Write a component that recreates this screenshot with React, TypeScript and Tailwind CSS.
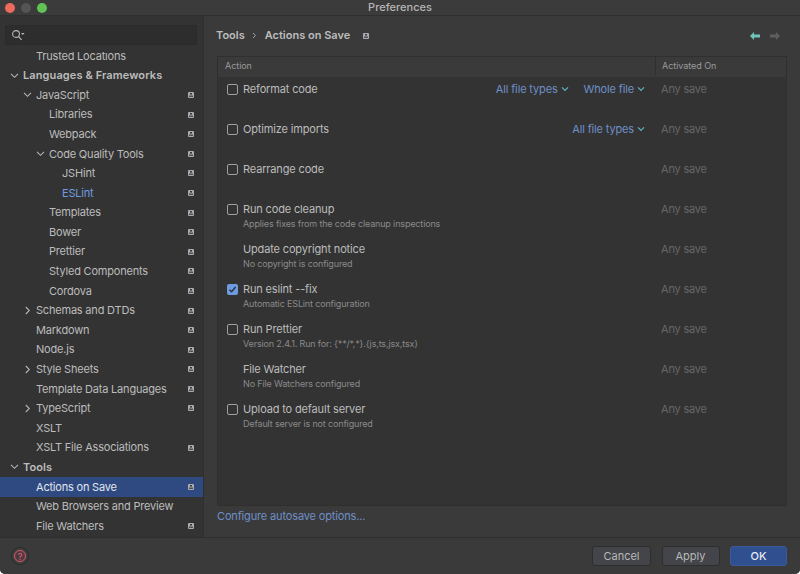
import React from "react";

const font = { fontFamily: "Inter, 'Noto Sans', sans-serif" };

function Badge({ className = "" }: { className?: string }) {
  return (
    <svg width="6" height="6" viewBox="0 0 6 6" className={className}>
      <rect width="6" height="6" rx="1" fill="#a9adb2" />
      <rect x="2" y="1" width="2" height="1.6" fill="#3a3a3a" />
      <rect x="1" y="3.6" width="4" height="1.2" fill="#3a3a3a" />
    </svg>
  );
}

function Chevron({ open, left }: { open: boolean; left: number }) {
  return (
    <svg
      width="9"
      height="9"
      viewBox="0 0 9 9"
      fill="none"
      stroke="#b4b4b4"
      strokeWidth="1.1"
      className="absolute top-[5px]"
      style={{ left }}
    >
      {open ? <path d="M1 2.8 4.5 6.3 8 2.8" /> : <path d="M2.8 1 6.3 4.5 2.8 8" />}
    </svg>
  );
}

type Item = { t: string; x: number; ch?: "o" | "c"; b?: boolean; bold?: boolean; sel?: boolean; link?: boolean };

const tree: Item[] = [
  { t: "Trusted Locations", x: 36 },
  { t: "Languages & Frameworks", x: 23, ch: "o", bold: true },
  { t: "JavaScript", x: 36, ch: "o", b: true },
  { t: "Libraries", x: 49, b: true },
  { t: "Webpack", x: 49, b: true },
  { t: "Code Quality Tools", x: 49, ch: "o", b: true },
  { t: "JSHint", x: 62, b: true },
  { t: "ESLint", x: 62, b: true, link: true },
  { t: "Templates", x: 49, b: true },
  { t: "Bower", x: 49, b: true },
  { t: "Prettier", x: 49, b: true },
  { t: "Styled Components", x: 49, b: true },
  { t: "Cordova", x: 49, b: true },
  { t: "Schemas and DTDs", x: 36, ch: "c", b: true },
  { t: "Markdown", x: 36, b: true },
  { t: "Node.js", x: 36, b: true },
  { t: "Style Sheets", x: 36, ch: "c", b: true },
  { t: "Template Data Languages", x: 36, b: true },
  { t: "TypeScript", x: 36, ch: "c", b: true },
  { t: "XSLT", x: 36 },
  { t: "XSLT File Associations", x: 36, b: true },
  { t: "Tools", x: 23, ch: "o", bold: true },
  { t: "Actions on Save", x: 36, b: true, sel: true },
  { t: "Web Browsers and Preview", x: 36 },
  { t: "File Watchers", x: 36, b: true },
];

function TreeRow({ item }: { item: Item }) {
  const color = item.sel ? "text-[#e2e6ee]" : item.link ? "text-[#6f9be0]" : "text-[#bcbcbc]";
  return (
    <div
      className={`relative flex h-[19.6px] shrink-0 items-center text-[11px] ${item.sel ? "bg-[#2f4a80]" : ""} ${color} ${item.bold ? "font-semibold tracking-[0.1px]" : "tracking-[-0.2px]"}`}
      style={{ paddingLeft: item.x }}
    >
      {item.ch && <Chevron open={item.ch === "o"} left={item.x - 13.5} />}
      <span className="flex-1 whitespace-nowrap">{item.t}</span>
      {item.b && <Badge className="mr-[9px]" />}
    </div>
  );
}

function Dropdown({ t }: { t: string }) {
  return (
    <span className="flex items-center gap-[3px] whitespace-nowrap text-[#6f8fc8]">
      {t}
      <svg width="8" height="6" viewBox="0 0 8 6" fill="none" stroke="#5fb4c4" strokeWidth="1.2">
        <path d="M1 1.3 4 4.3 7 1.3" />
      </svg>
    </span>
  );
}

function Check({ on }: { on?: boolean }) {
  return on ? (
    <span className="flex h-[11px] w-[11px] items-center justify-center rounded-[2px] bg-[#6e9ae0]">
      <svg width="9" height="9" viewBox="0 0 9 9" fill="none" stroke="#26303f" strokeWidth="1.4">
        <path d="M1.5 4.7 3.6 6.8 7.6 2" />
      </svg>
    </span>
  ) : (
    <span className="h-[11px] w-[11px] rounded-[2px] border border-[#a0a0a0]" />
  );
}

type Row = { t: string; s?: string; c?: boolean; on?: boolean; d?: string[] };
const rows: Row[] = [
  { t: "Reformat code", c: true, d: ["All file types", "Whole file"] },
  { t: "Optimize imports", c: true, d: ["All file types"] },
  { t: "Rearrange code", c: true },
  { t: "Run code cleanup", s: "Applies fixes from the code cleanup inspections", c: true },
  { t: "Update copyright notice", s: "No copyright is configured" },
  { t: "Run eslint --fix", s: "Automatic ESLint configuration", c: true, on: true },
  { t: "Run Prettier", s: "Version 2.4.1. Run for: {**/*,*}.{js,ts,jsx,tsx}", c: true },
  { t: "File Watcher", s: "No File Watchers configured" },
  { t: "Upload to default server", s: "Default server is not configured", c: true },
];

function ActionRow({ r }: { r: Row }) {
  return (
    <div className="flex h-10 shrink-0">
      <div className="flex w-[438px] shrink-0 items-start pt-[5px]">
        <div className="flex h-[14px] w-[25px] shrink-0 items-center pl-[9px]">{r.c && <Check on={r.on} />}</div>
        <div className="flex-1">
          <div className="flex h-[14px] items-center justify-between pr-[11px] text-[11px] tracking-[-0.15px] text-[#bcbcbc]">
            <span className="whitespace-nowrap">{r.t}</span>
            {r.d && (
              <span className="flex gap-[15px]">
                {r.d.map((d) => (
                  <Dropdown key={d} t={d} />
                ))}
              </span>
            )}
          </div>
          {r.s && <div className="mt-[1px] text-[9px] leading-[13px] tracking-[-0.15px] text-[#8a8a8a]">{r.s}</div>}
        </div>
      </div>
      <div className="h-[24px] pl-[5px] pt-[5px] text-[11px] leading-[14px] tracking-[-0.2px] text-[#666666]">Any save</div>
    </div>
  );
}

function Btn({ t, primary, w }: { t: string; primary?: boolean; w: string }) {
  return (
    <button
      className={`h-[20px] ${w} rounded-[3px] border text-[11px] ${primary ? "border-[#3a5a98] bg-[#2f4f8f] font-medium text-[#e4e8f0]" : "border-[#2e2e2e] bg-[#43454a] text-[#b8b8b8]"}`}
    >
      {t}
    </button>
  );
}

export default function App() {
  return (
    <div style={font} className="flex h-[574px] w-[800px] flex-col overflow-hidden rounded-b-[5px] bg-[#3a3a3a]">
      {/* Title bar */}
      <div className="relative flex h-[16px] shrink-0 items-center justify-center border-b border-[#2f2f2f] bg-[#3b3b3b] text-[11px] font-medium text-[#b5b5b5]">
        <div className="absolute left-[5px] top-[3px] flex gap-[6px]">
          <span className="h-[10px] w-[10px] rounded-full bg-[#ee6a5f]" />
          <span className="h-[10px] w-[10px] rounded-full bg-[#545454]" />
          <span className="h-[10px] w-[10px] rounded-full bg-[#5fc454]" />
        </div>
        Preferences
      </div>

      <div className="flex min-h-0 flex-1">
        {/* Sidebar */}
        <div className="flex w-[204px] shrink-0 flex-col border-r border-[#2f2f2f] bg-[#333333]">
          <div className="shrink-0 px-[5px] pt-[9px]">
            <div className="flex h-[20px] w-[192px] items-center rounded-[2px] border border-[#2b2b2b] bg-[#2d2d2d] pl-[5px]">
              <svg width="15" height="12" viewBox="0 0 15 12" fill="none" stroke="#b8b8b8" strokeWidth="1.1">
                <circle cx="5" cy="5" r="3.4" />
                <path d="M7.6 7.6 10.6 10.8" />
                <path d="M10 4h3.6l-1.8 1.9z" fill="#b8b8b8" stroke="none" />
              </svg>
            </div>
          </div>
          <div className="mt-[7px] flex min-h-0 flex-1 flex-col overflow-hidden">
            <div className="-mt-[6px] flex flex-col">
              {tree.map((it) => (
                <TreeRow key={it.t} item={it} />
              ))}
            </div>
          </div>
        </div>

        {/* Main */}
        <div className="flex min-w-0 flex-1 flex-col px-[13px]">
          <div className="flex h-[39px] shrink-0 items-center text-[11px] font-semibold text-[#bcbcbc]">
            <span className="-ml-[1px]">Tools</span>
            <svg width="5" height="7" viewBox="0 0 5 7" fill="none" stroke="#a0a0a0" className="mx-[7.5px]">
              <path d="M1 1l2.5 2.5L1 6" />
            </svg>
            <span>Actions on Save</span>
            <Badge className="ml-[13px]" />
            <svg width="10" height="8" viewBox="0 0 10 8" className="ml-auto" fill="#6fc3bb">
              <path d="M0 4 4 0v2.5h6v3H4V8z" />
            </svg>
            <svg width="10" height="8" viewBox="0 0 10 8" className="ml-[10px] mr-[7px]" fill="#5e5e5e">
              <path d="M10 4 6 0v2.5H0v3h6V8z" />
            </svg>
          </div>

          <div className="mt-[1px] flex h-[450px] shrink-0 flex-col border border-[#2f2f2f] bg-[#333333]">
            <div className="flex h-[20px] shrink-0 bg-[#3a3a3a] pb-[2px] text-[9px] tracking-[-0.05px] text-[#9a9a9a]">
              <div className="flex w-[438px] items-center border-r border-[#2f2f2f] pl-[7px]">Action</div>
              <div className="flex items-center pl-[6px]">Activated On</div>
            </div>
            {rows.map((r) => (
              <ActionRow key={r.t} r={r} />
            ))}
          </div>

          <div className="flex h-[20px] items-center text-[11px] tracking-[-0.15px] text-[#6f8fc8]">Configure autosave options...</div>
        </div>
      </div>

      {/* Footer */}
      <div className="flex h-[37px] shrink-0 items-center border-t border-[#2f2f2f] bg-[#3a3a3a] pl-[11px] pr-[13px]">
        <div className="flex h-[18px] w-[18px] items-center justify-center rounded-full border border-[#2a2a2a] bg-[#3f3f3f]">
          <span className="flex h-[12px] w-[12px] items-center justify-center rounded-full border border-[#d8566c] bg-[#4c3a40] text-[9px] font-medium leading-none text-[#e0606f]">?</span>
        </div>
        <div className="ml-auto flex gap-[10.5px]">
          <Btn t="Cancel" w="w-[59px]" />
          <Btn t="Apply" w="w-[58px]" />
          <Btn t="OK" w="w-[57px]" primary />
        </div>
      </div>
    </div>
  );
}
